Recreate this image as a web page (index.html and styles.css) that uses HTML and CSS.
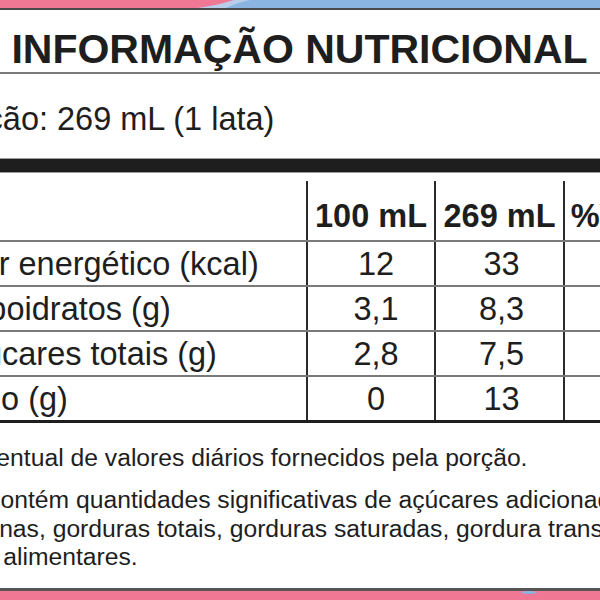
FILE: index.html
```html
<!DOCTYPE html>
<html lang="pt-BR">
<head>
<meta charset="utf-8">
<title>Informação Nutricional</title>
<link rel="stylesheet" href="styles.css">
</head>
<body>
<div class="band-top">
  <svg class="band-svg" width="600" height="8" viewBox="0 0 600 8" preserveAspectRatio="none">
    <rect x="0" y="0" width="600" height="8" fill="#8bb5e1"/>
    <path d="M0 0 H250 C240 2 232 5 226 8 H0 Z" fill="#b9cdea"/>
    <path d="M0 0 H234 C224 3 212 6 198 8 H0 Z" fill="#f07895"/>
  </svg>
</div>
<main class="label">
  <h1 class="title">INFORMAÇÃO NUTRICIONAL</h1>
  <p class="serving">Porção: 269 mL (1 lata)</p>
  <div class="bar"></div>
  <div class="table">
    <div class="row head">
      <div class="cell name"></div>
      <div class="cell num">100 mL</div>
      <div class="cell num">269 mL</div>
      <div class="cell num pct">%VD*</div>
    </div>
    <div class="row">
      <div class="cell name">Valor energético (kcal)</div>
      <div class="cell num c2">12</div>
      <div class="cell num c3">33</div>
      <div class="cell num pct">2</div>
    </div>
    <div class="row">
      <div class="cell name">Carboidratos (g)</div>
      <div class="cell num c2">3,1</div>
      <div class="cell num c3">8,3</div>
      <div class="cell num pct">3</div>
    </div>
    <div class="row">
      <div class="cell name sub">Açúcares totais (g)</div>
      <div class="cell num c2">2,8</div>
      <div class="cell num c3">7,5</div>
      <div class="cell num pct"></div>
    </div>
    <div class="row last">
      <div class="cell name">Sódio (g)</div>
      <div class="cell num c2">0</div>
      <div class="cell num c3">13</div>
      <div class="cell num pct">1</div>
    </div>
  </div>
  <p class="note">*Percentual de valores diários fornecidos pela porção.</p>
  <div class="note note2">
    <span class="line">Não contém quantidades significativas de açúcares adicionados,</span>
    <span class="line">proteínas, gorduras totais, gorduras saturadas, gordura trans, fibras</span>
    <span class="line">fibras alimentares.</span>
  </div>
</main>
<div class="band-bottom"></div>
</body>
</html>
```
FILE: styles.css
```css
html, body {
  margin: 0;
  padding: 0;
  width: 600px;
  height: 600px;
  overflow: hidden;
  background: #ffffff;
}

body {
  font-family: "Liberation Sans", Arial, sans-serif;
  color: #1e1e1e;
  display: flex;
  flex-direction: column;
}

.band-top {
  height: 8px;
  border-bottom: 2px solid #4a4a4a;
  overflow: hidden;
  flex: none;
}

.band-svg {
  display: block;
}

.label {
  width: 727px;
  margin-left: -64px;
  flex: none;
}

.title {
  margin: 0;
  padding-top: 17px;
  padding-bottom: 1px;
  font-size: 41px;
  line-height: 44px;
  font-weight: 700;
  text-align: center;
  border-bottom: 2px solid #7a7a7a;
  white-space: nowrap;
}

.serving {
  margin: 27px 0 0;
  font-size: 32.5px;
  line-height: 36px;
  white-space: nowrap;
}

.bar {
  margin-top: 21px;
  height: 13px;
  background: #1e1e1e;
  border-top: 1px solid #9a9a9a;
  border-bottom: 1px solid #9a9a9a;
}

.table {
  margin-top: 8px;
}

.row {
  display: grid;
  grid-template-columns: 370px 128px 129px 100px;
  font-size: 32.5px;
  line-height: 36px;
}

.row + .row {
  border-top: 2px solid #7a7a7a;
}

.row.last {
  border-bottom: 3px solid #1e1e1e;
}

.cell {
  padding: 4px 0 3px;
  white-space: nowrap;
}

.head .cell {
  padding: 17px 0 6px;
  font-weight: 700;
}

.num {
  text-align: center;
  border-left: 2px solid #2b2b2b;
}

.c2 {
  padding-left: 10px;
}

.c3 {
  padding-left: 4px;
}

.sub {
  padding-left: 10px;
}

.note {
  margin: 21px 0 0;
  font-size: 24.7px;
  line-height: 28px;
  white-space: nowrap;
}

.note2 {
  margin-top: 14px;
  display: flex;
  flex-direction: column;
  line-height: 28.5px;
}

.line {
  display: block;
}

.band-bottom {
  margin-top: auto;
  height: 9px;
  background: #f07895;
  border-top: 3px solid #555555;
  flex: none;
  position: relative;
}

.band-bottom::after {
  content: "";
  position: absolute;
  left: 521px;
  top: 0;
  width: 16px;
  height: 3px;
  border-radius: 50%;
  background: #8bb5e1;
}
```
